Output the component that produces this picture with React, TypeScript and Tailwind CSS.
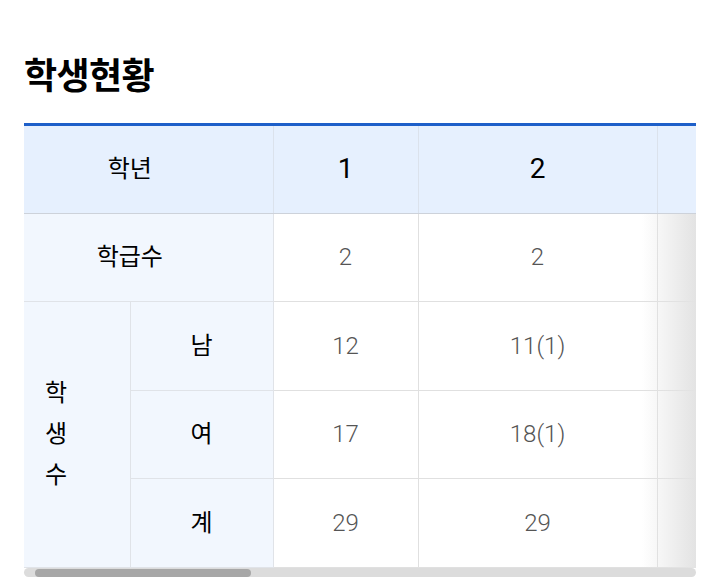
import React from 'react';

const grades = ['1', '2'];

const rows = [
  { label: '남', values: ['12', '11(1)'] },
  { label: '여', values: ['17', '18(1)'] },
  { label: '계', values: ['29', '29'] },
];

const classCounts = ['2', '2'];

const gradeWidths = ['w-[145px]', 'w-[239px]'];

export default function App() {
  return (
    <div className="min-h-[585px] bg-white px-6 pt-[48px] font-['Roboto','Noto_Sans_CJK_KR',sans-serif] text-black">
      <h2 className="font-['Noto_Sans_CJK_KR',sans-serif] text-[36px] font-bold leading-[50px] tracking-[-0.6px] text-black">
        학생현황
      </h2>

      <div className="relative mt-[25px] border-t-[3px] border-[#1d5fc9]">
        <div className="overflow-hidden">
          <table className="w-[700px] table-fixed border-collapse">
            <colgroup>
              <col className="w-[106px]" />
              <col className="w-[143px]" />
              {gradeWidths.map((w, i) => (
                <col key={i} className={w} />
              ))}
              <col />
            </colgroup>
            <thead>
              <tr className="h-[87px] bg-[#e6f0fe]">
                <th
                  colSpan={2}
                  className="border-r border-b border-r-[#dbe2ec] border-b-[#cdd2da] pr-[37px] text-center text-[24px] font-normal text-black"
                >
                  학년
                </th>
                {grades.map((g) => (
                  <th
                    key={g}
                    className="border-r border-b border-r-[#dbe2ec] border-b-[#cdd2da] text-center text-[28px] font-normal text-black"
                  >
                    {g}
                  </th>
                ))}
                <th className="border-b border-b-[#cdd2da]" />
              </tr>
            </thead>
            <tbody>
              <tr className="h-[88.5px]">
                <th
                  colSpan={2}
                  className="border-r border-b border-[#e0e3e8] bg-[#f2f7fe] pr-[37px] text-center text-[24px] font-normal text-black"
                >
                  학급수
                </th>
                {classCounts.map((c, i) => (
                  <td
                    key={i}
                    className="border-r border-b border-[#e0e0e0] text-center text-[24px] font-light text-[#555]"
                  >
                    {c}
                  </td>
                ))}
                <td className="border-b border-[#e0e0e0]" />
              </tr>
              {rows.map((row, ri) => (
                <tr key={row.label} className="h-[88.5px]">
                  {ri === 0 && (
                    <th
                      rowSpan={3}
                      className="border-r border-b border-[#e0e3e8] bg-[#f2f7fe] pl-[21px] text-left text-[24px] leading-[41px] font-normal text-black"
                    >
                      학<br />생<br />수
                    </th>
                  )}
                  <th className="border-r border-b border-[#e0e3e8] bg-[#f2f7fe] text-center text-[24px] font-normal text-black">
                    {row.label}
                  </th>
                  {row.values.map((v, i) => (
                    <td
                      key={i}
                      className="border-r border-b border-[#e0e0e0] text-center text-[24px] font-light text-[#555]"
                    >
                      {v}
                    </td>
                  ))}
                  <td className="border-b border-[#e0e0e0]" />
                </tr>
              ))}
            </tbody>
          </table>
        </div>

        {/* scroll hint shading over the body rows */}
        <div className="pointer-events-none absolute top-[88px] right-0 bottom-[9px] w-[54px] bg-gradient-to-r from-white/0 to-[#e3e3e3]" />

        {/* horizontal scrollbar */}
        <div className="h-[9px] rounded-full bg-[#dcdcdc] pt-px pl-[11px]">
          <div className="h-[8px] w-[216px] rounded-full bg-[#a7a7a7]" />
        </div>
      </div>
    </div>
  );
}
